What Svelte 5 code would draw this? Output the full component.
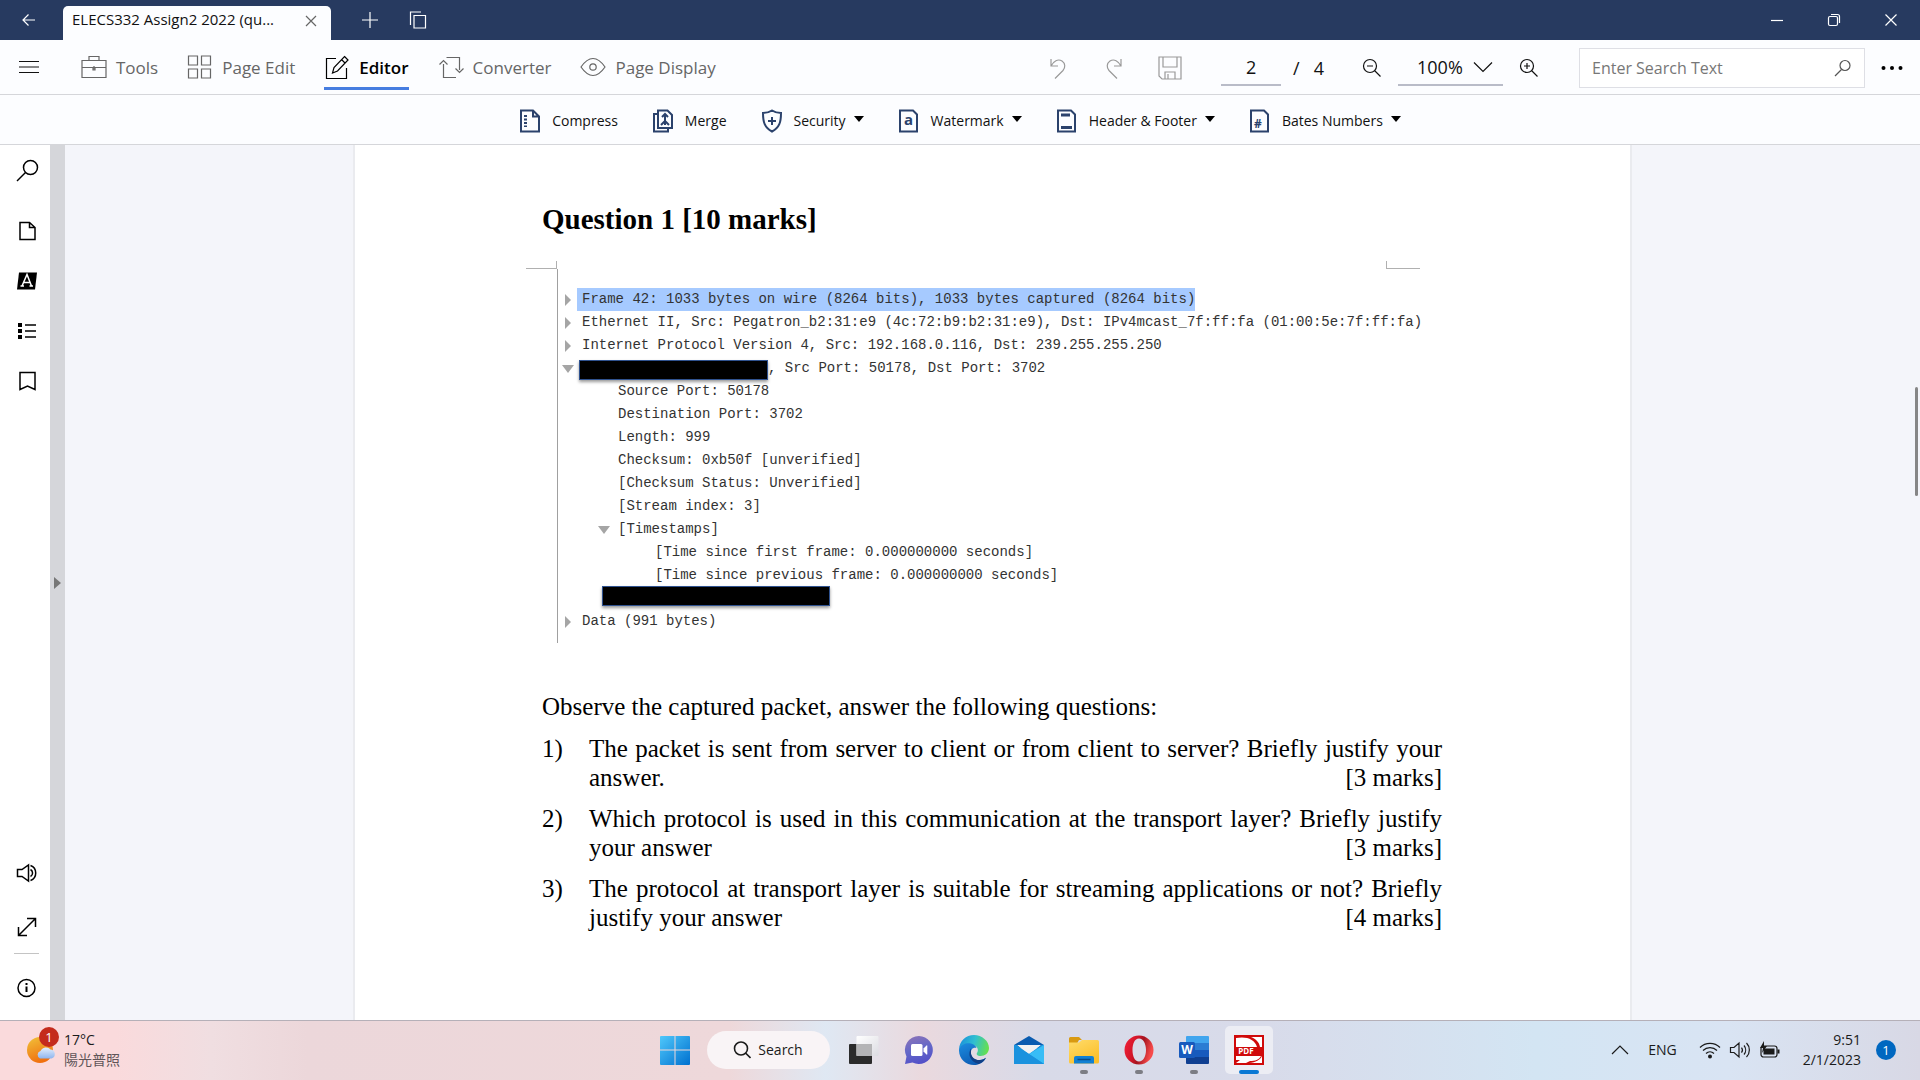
<script lang="ts">
  interface PacketRow {
    level: number;
    text: string;
    marker?: 'closed' | 'open';
    selected?: boolean;
    redacted?: 'head' | 'full';
  }

  const packetRows: PacketRow[] = [
    { level: 0, marker: 'closed', selected: true, text: 'Frame 42: 1033 bytes on wire (8264 bits), 1033 bytes captured (8264 bits)' },
    { level: 0, marker: 'closed', text: 'Ethernet II, Src: Pegatron_b2:31:e9 (4c:72:b9:b2:31:e9), Dst: IPv4mcast_7f:ff:fa (01:00:5e:7f:ff:fa)' },
    { level: 0, marker: 'closed', text: 'Internet Protocol Version 4, Src: 192.168.0.116, Dst: 239.255.255.250' },
    { level: 0, marker: 'open', redacted: 'head', text: ', Src Port: 50178, Dst Port: 3702' },
    { level: 1, text: 'Source Port: 50178' },
    { level: 1, text: 'Destination Port: 3702' },
    { level: 1, text: 'Length: 999' },
    { level: 1, text: 'Checksum: 0xb50f [unverified]' },
    { level: 1, text: '[Checksum Status: Unverified]' },
    { level: 1, text: '[Stream index: 3]' },
    { level: 1, marker: 'open', text: '[Timestamps]' },
    { level: 2, text: '[Time since first frame: 0.000000000 seconds]' },
    { level: 2, text: '[Time since previous frame: 0.000000000 seconds]' },
    { level: 0, redacted: 'full', text: '' },
    { level: 0, marker: 'closed', text: 'Data (991 bytes)' },
  ];

  // PDF text is set line by line, so each question keeps its own line break
  const questions = [
    { first: 'The packet is sent from server to client or from client to server? Briefly justify your', last: 'answer.', marks: 3 },
    { first: 'Which protocol is used in this communication at the transport layer? Briefly justify', last: 'your answer', marks: 3 },
    { first: 'The protocol at transport layer is suitable for streaming applications or not? Briefly', last: 'justify your answer', marks: 4 },
  ];

  const modes = ['Tools', 'Page Edit', 'Editor', 'Converter', 'Page Display'];
  const actions = [
    { name: 'Compress', menu: false },
    { name: 'Merge', menu: false },
    { name: 'Security', menu: true },
    { name: 'Watermark', menu: true },
    { name: 'Header & Footer', menu: true },
    { name: 'Bates Numbers', menu: true },
  ];

  let activeMode = $state('Editor');
  let pageNumber = $state('2');
  let zoomLevel = $state('100%');
  let searchText = $state('');
</script>

<div class="window">
  <header class="titlebar">
    <button class="title-btn back" aria-label="Back">
      <svg width="14" height="14" viewBox="0 0 14 14"><path d="M13 7H1.500M6.500 1.500L1 7l5.500 5.500" /></svg>
    </button>
    <div class="tab">
      <span class="tab-name">ELECS332 Assign2 2022 (qu...</span>
      <button class="tab-close" aria-label="Close tab">
        <svg width="12" height="12" viewBox="0 0 12 12"><path d="M1 1l10 10M11 1L1 11" /></svg>
      </button>
    </div>
    <button class="title-btn new-tab" aria-label="New tab">
      <svg width="18" height="18" viewBox="0 0 18 18"><path d="M9 1v16M1 9h16" /></svg>
    </button>
    <button class="title-btn copy-tab" aria-label="Duplicate tab">
      <svg width="18" height="18" viewBox="0 0 18 18"><path d="M1.500 14V1H12M5 4.500h11.500V17H5z" /></svg>
    </button>
    <div class="window-controls">
      <button class="title-btn" aria-label="Minimize">
        <svg width="14" height="14" viewBox="0 0 14 14"><path d="M1 7.500h12" /></svg>
      </button>
      <button class="title-btn" aria-label="Restore">
        <svg width="14" height="14" viewBox="0 0 14 14"><rect x="1.500" y="3.500" width="9" height="9" rx="1.500" /><path d="M4 1.500h6.500a2 2 0 0 1 2 2V10" /></svg>
      </button>
      <button class="title-btn" aria-label="Close">
        <svg width="14" height="14" viewBox="0 0 14 14"><path d="M1.500 1.500l11 11M12.500 1.500l-11 11" /></svg>
      </button>
    </div>
  </header>

  <div class="toolbar">
    <button class="icon-btn menu" aria-label="Menu">
      <svg width="22" height="14" viewBox="0 0 22 14"><path d="M1 1.500h20M1 7h20M1 12.500h20" /></svg>
    </button>
    <nav class="modes">
      {#each modes as mode}
        <button class="mode" class:active={mode === activeMode} onclick={() => (activeMode = mode)}>
          <svg width="26" height="26" viewBox="0 0 26 26">
            {#if mode === 'Tools'}
              <path d="M1 6.500h24v17H1zM8 6.500V2.500h10v4M1 13.500h24M13 12v4" /><path d="M12 14h2v2h-2z" />
            {:else if mode === 'Page Edit'}
              <path d="M1.500 2h9v9h-9zM14.500 2h9v9h-9zM1.500 15h9v9h-9zM14.500 15h9v9h-9z" />
            {:else if mode === 'Editor'}
              <path d="M12 4.500H2.500v20h20V14" /><path d="M20.500 2.500l3.500 3.500L13.500 17l-5 2 1.500-5.500zM17.500 5.500l3.500 3.500" />
            {:else if mode === 'Converter'}
              <path d="M5.500 10v13.500H18M1.500 10.500l4-4 4 4M8.500 3.500h13V16M17.500 14.500l4 4 4-4" />
            {:else}
              <path d="M1 13C5.500 6.500 9 4.500 13 4.500S20.500 6.500 25 13c-4.500 6.500-8 8.500-12 8.500S5.500 19.500 1 13z" /><circle cx="13" cy="13" r="3.200" />
            {/if}
          </svg>
          <span>{mode}</span>
        </button>
      {/each}
    </nav>

    <div class="view-tools">
      <button class="icon-btn faded" aria-label="Undo">
        <svg width="24" height="24" viewBox="0 0 24 24"><path d="M5 3v7h7M5 10c2.500-5 7-7.500 11-5 3.500 2.500 3.500 6.500 1 9.500l-8 8" /></svg>
      </button>
      <button class="icon-btn faded redo" aria-label="Redo">
        <svg width="24" height="24" viewBox="0 0 24 24"><path d="M19 3v7h-7M19 10C16.500 5 12 2.500 8 5c-3.500 2.500-3.500 6.500-1 9.500l8 8" /></svg>
      </button>
      <button class="icon-btn faded save" aria-label="Save">
        <svg width="24" height="24" viewBox="0 0 24 24"><path d="M1 1h22v22H4l-3-3zM5 1v10h14V1M7 23v-7h10v7M10 18v5" /></svg>
      </button>
      <input class="page-input" aria-label="Page number" bind:value={pageNumber} />
      <span class="page-total"><span>/</span><span>4</span></span>
      <button class="icon-btn" aria-label="Zoom out">
        <svg width="20" height="20" viewBox="0 0 20 20"><circle cx="8" cy="8" r="6.500" /><path d="M5 8h6M12.500 12.500l6 6" /></svg>
      </button>
      <label class="zoom">
        <select aria-label="Zoom level" bind:value={zoomLevel}>
          <option>100%</option>
          <option>125%</option>
          <option>150%</option>
        </select>
        <svg width="20" height="12" viewBox="0 0 20 12"><path d="M1 1.500l9 9 9-9" /></svg>
      </label>
      <button class="icon-btn" aria-label="Zoom in">
        <svg width="20" height="20" viewBox="0 0 20 20"><circle cx="8" cy="8" r="6.500" /><path d="M5 8h6M8 5v6M12.500 12.500l6 6" /></svg>
      </button>
      <div class="search-box">
        <input type="text" aria-label="Search" placeholder="Enter Search Text" bind:value={searchText} />
        <svg width="18" height="18" viewBox="0 0 18 18"><circle cx="11" cy="6.500" r="5" /><path d="M7.500 10.500L1 17" /></svg>
      </div>
      <button class="icon-btn more" aria-label="More">
        <svg width="22" height="6" viewBox="0 0 22 6"><circle cx="2.500" cy="3" r="2" /><circle cx="11" cy="3" r="2" /><circle cx="19.500" cy="3" r="2" /></svg>
      </button>
    </div>
  </div>

  <div class="actions">
    {#each actions as action}
      <button class="action">
        <svg width="22" height="24" viewBox="0 0 22 24">
          {#if action.name === 'Compress'}
            <path d="M2 1.500h12l6 6v15H2zM14 1.500v6h6" /><path d="M6.500 6v12" stroke-dasharray="2 1.500" stroke-width="3" />
          {:else if action.name === 'Merge'}
            <path d="M6 1.500h9.500l4.500 4.500v13H6z" /><path d="M6 5H2v17.500h14V19M13 16V5M10 8l3-3 3 3M9 16l4-4 4 4" />
          {:else if action.name === 'Security'}
            <path d="M11 1.500c3 2 6 2.500 9 2.500 0 9-1.500 14.500-9 18.500C3.500 18.500 2 13 2 4c3 0 6-.500 9-2.500zM11 8v8M7 12h8" />
          {:else if action.name === 'Watermark'}
            <path d="M2 1.500h13l4 4v17H2z" /><text x="6" y="16">a</text>
          {:else if action.name === 'Header & Footer'}
            <path d="M2 1.500h13l4 4v17H2z" /><path d="M5 6h9M5 18.500h11" stroke-width="3" />
          {:else}
            <path d="M2 1.500h13l4 4v17H2z" /><text class="hash" x="5" y="19">#</text>
          {/if}
        </svg>
        <span>{action.name}</span>
        {#if action.menu}
          <svg class="caret" width="10" height="6" viewBox="0 0 10 6"><path d="M0 0h10L5 6z" /></svg>
        {/if}
      </button>
    {/each}
  </div>

  <div class="workspace">
    <aside class="sidebar">
      <button class="find" aria-label="Find">
        <svg width="24" height="24" viewBox="0 0 24 24"><circle cx="15.500" cy="8.500" r="7" /><path d="M10.500 13.500L2 22" /></svg>
      </button>
      <button aria-label="Thumbnails">
        <svg width="20" height="20" viewBox="0 0 20 20"><path d="M3 1.500h9.500L18 6.500v12H3zM12.500 1.500v5H18" /></svg>
      </button>
      <button aria-label="Annotations">
        <svg width="20" height="20" viewBox="0 0 20 20"><path class="solid" d="M2 1.500h18L18 18.500H0z" /><path class="knockout" d="M5 15l5-11.500L14.500 15M6.500 11.500h6M3.500 15h3.500M12.500 15H16" /></svg>
      </button>
      <button aria-label="Outline">
        <svg width="20" height="20" viewBox="0 0 20 20"><path class="solid" d="M1 2h4v4H1zM1 8h4v4H1zM1 14h4v4H1z" /><path d="M8 4h11M8 10h11M8 16h11" /></svg>
      </button>
      <button aria-label="Bookmarks">
        <svg width="20" height="20" viewBox="0 0 20 20"><path d="M3 1.500h15v17L10.500 15 3 18.500z" /></svg>
      </button>
      <div class="spacer"></div>
      <button class="speak" aria-label="Read aloud">
        <svg width="22" height="20" viewBox="0 0 22 20"><path d="M1.500 6.500H6L12.500 2v16L6 13.500H1.500zM14.500 2.500a8 8 0 0 1 0 15M14.500 6.500a4 4 0 0 1 0 7" /></svg>
      </button>
      <button aria-label="Full screen">
        <svg width="20" height="20" viewBox="0 0 20 20"><path d="M1.500 18.500l17-17M10 1.500h8.500V10M1.500 10v8.500H10" /></svg>
      </button>
      <hr />
      <button aria-label="Info">
        <svg width="20" height="20" viewBox="0 0 20 20"><circle cx="9.500" cy="10" r="8.500" /><path d="M9.500 8.500V14M9.500 5v2" stroke-width="2" /></svg>
      </button>
    </aside>
    <button class="splitter" aria-label="Expand sidebar">
      <svg width="7" height="12" viewBox="0 0 7 12"><path d="M0 0l7 6-7 6z" /></svg>
    </button>

    <main class="canvas">
      <article class="page">
        <h1>Question 1 [10 marks]</h1>

        <figure class="capture">
          <div class="crop-marks">
            <span class="crop left"></span>
            <span class="crop right"></span>
          </div>
          <div class="packet">
            {#each packetRows as row}
              <div class="packet-row level-{row.level}">
                <span class="marker">
                  {#if row.marker === 'closed'}
                    <svg width="6" height="12" viewBox="0 0 6 12"><path d="M0 0l6 6-6 6z" /></svg>
                  {:else if row.marker === 'open'}
                    <svg width="12" height="8" viewBox="0 0 12 8"><path d="M0 0h12L6 8z" /></svg>
                  {/if}
                </span>
                {#if row.redacted}
                  <span class="redaction {row.redacted}"></span>
                {/if}
                <span class="packet-text" class:selected={row.selected} class:after-redaction={row.redacted}>{row.text}</span>
              </div>
            {/each}
          </div>
        </figure>

        <p class="intro">Observe the captured packet, answer the following questions:</p>
        <ol class="questions">
          {#each questions as question, i}
            <li>
              <span class="number">{i + 1})</span>
              <div class="question">
                <p class="first-line">{question.first}</p>
                <p class="last-line"><span>{question.last}</span><span>[{question.marks} marks]</span></p>
              </div>
            </li>
          {/each}
        </ol>
      </article>
      <div class="scroll-thumb"></div>
    </main>
  </div>

  <footer class="taskbar">
    <button class="weather">
      <span class="weather-icon">
        <svg width="30" height="30" viewBox="0 0 30 30">
          <defs>
            <linearGradient id="sun" x1="0" y1="0" x2="0.400" y2="1"><stop offset="0" stop-color="#f0c23a" /><stop offset="1" stop-color="#f0700f" /></linearGradient>
            <linearGradient id="cloud" x1="0" y1="0" x2="0" y2="1"><stop offset="0" stop-color="#e4effc" /><stop offset="1" stop-color="#8fb5ee" /></linearGradient>
          </defs>
          <circle cx="14" cy="15" r="13" fill="url(#sun)" />
          <path d="M14 23.500a4 4 0 0 1 .500-7.500 6 6 0 0 1 10-1.500 4.600 4.600 0 0 1 1 9z" fill="url(#cloud)" />
        </svg>
        <span class="weather-badge">1</span>
      </span>
      <span class="weather-text"><span>17°C</span><span class="condition">陽光普照</span></span>
    </button>

    <div class="apps">
      <button class="app" aria-label="Start">
        <svg width="30" height="30" viewBox="0 0 30 30">
          <defs><linearGradient id="win" x1="0" y1="0" x2="1" y2="1"><stop offset="0" stop-color="#4fc8fb" /><stop offset="1" stop-color="#0070cf" /></linearGradient></defs>
          <path d="M1 1h13.500v13.500H0V2a1 1 0 0 1 1-1zM15.500 1H29a1 1 0 0 1 1 1v12.500H15.500zM0 15.500h14.500V30H1a1 1 0 0 1-1-1zM15.500 15.500H30V29a1 1 0 0 1-1 1H15.500z" fill="url(#win)" />
        </svg>
      </button>
      <button class="search-pill">
        <svg width="18" height="18" viewBox="0 0 18 18"><circle cx="8" cy="7.500" r="6.500" /><path d="M12.500 12l5 5" /></svg>
        <span>Search</span>
      </button>
      <button class="app" aria-label="Task view">
        <svg width="30" height="30" viewBox="0 0 30 30">
          <defs><linearGradient id="pane" x1="0" y1="0" x2="1" y2="1"><stop offset="0" stop-color="#ffffff" /><stop offset="1" stop-color="#dcdce2" /></linearGradient></defs>
          <rect x="0" y="9" width="23" height="20" rx="1" fill="#2b2b2b" />
          <rect x="7.500" y="1" width="22" height="20" rx="1" fill="url(#pane)" />
          <rect x="7.500" y="9" width="15.500" height="12" fill="#b4b4b6" />
        </svg>
      </button>
      <button class="app" aria-label="Chat">
        <svg width="30" height="30" viewBox="0 0 30 30">
          <defs><linearGradient id="chat" x1="0.200" y1="0" x2="0.500" y2="1"><stop offset="0" stop-color="#8b73b8" /><stop offset="0.500" stop-color="#6468c8" /><stop offset="1" stop-color="#5350c8" /></linearGradient></defs>
          <path d="M15 1a14 14 0 1 1-6.500 26.500L1 29l1.500-7.500A14 14 0 0 1 15 1z" fill="url(#chat)" />
          <rect x="7" y="9" width="11.500" height="12" rx="1.500" fill="#fff" />
          <path d="M19.500 13.500L22.500 10.500q.800-.500.800.500v8q0 1-.800.500l-3-3z" fill="#fff" />
        </svg>
      </button>
      <button class="app" aria-label="Edge">
        <svg width="30" height="30" viewBox="0 0 30 30">
          <defs>
            <linearGradient id="edge-top" x1="0" y1="0.300" x2="1" y2="0.500"><stop offset="0" stop-color="#1a91dc" /><stop offset="0.500" stop-color="#30bfd0" /><stop offset="1" stop-color="#66e04e" /></linearGradient>
            <linearGradient id="edge-side" x1="0" y1="0" x2="0.500" y2="1"><stop offset="0" stop-color="#1c8de0" /><stop offset="1" stop-color="#0d5cb4" /></linearGradient>
          </defs>
          <path d="M0 14.500C.500 5.500 7 0 15 0s15 6 15 13c0 5-4 8-8.500 8-3 0-4.500-1.500-3.500-3 1.500-2 1.500-7-4-8C8.500 9 3 11 0 14.500z" fill="url(#edge-top)" />
          <path d="M0 14.500C2.500 8.500 8 7.500 12 8.500c3 .500 5 2.500 5.500 4.500-4.500-1-6 2.500-5.500 6 .600 4 5 6.500 9 6 2.500-.300 4.500-1.200 6-2.300C25 27 20.500 30 15 30 6.500 30-.300 23.500 0 14.500z" fill="url(#edge-side)" />
          <path d="M12 13.500c-3.500 5-1.500 13 7.500 15.500 3.500-1 6-3.500 7.500-6.300-1.500 1.100-3.500 2-6 2.300-4.500.500-8.500-2.500-9-6.500z" fill="#103f86" />
        </svg>
      </button>
      <button class="app" aria-label="Mail">
        <svg width="30" height="30" viewBox="0 0 30 30">
          <path d="M0 10L15 1l15 9v3H0z" fill="#0a5cb0" />
          <path d="M3 10h24l-12 10z" fill="#f2f2f2" />
          <path d="M0 10l2.500 0L15 19 27.500 10H30v19H0z" fill="#1c96e0" />
          <path d="M15 19l15-9v19z" fill="#38bdf6" />
          <path d="M15 19l15 10H0V10z" fill="#1a92de" />
        </svg>
      </button>
      <button class="app running" aria-label="File Explorer">
        <svg width="30" height="30" viewBox="0 0 30 30">
          <defs><linearGradient id="folder" x1="0" y1="0" x2="0.600" y2="1"><stop offset="0" stop-color="#ffdc6b" /><stop offset="1" stop-color="#fbbf2a" /></linearGradient></defs>
          <path d="M0 3.500A1.500 1.500 0 0 1 1.500 2H10l3 3h-3L8 8.500H0z" fill="#d99a12" />
          <path d="M0 7.500h10l3-2.500h15.500A1.500 1.500 0 0 1 30 6.500V27a1.500 1.500 0 0 1-1.500 1.500h-27A1.500 1.500 0 0 1 0 27z" fill="url(#folder)" />
          <path d="M5 28.500V23a2 2 0 0 1 2-2h16a2 2 0 0 1 2 2v5.500z" fill="#1180d3" />
          <path d="M8.500 24.500h13" stroke="#0a4b86" stroke-width="1.500" />
        </svg>
      </button>
      <button class="app running" aria-label="Opera">
        <svg width="30" height="30" viewBox="0 0 30 30">
          <defs><linearGradient id="opera" x1="0" y1="0" x2="1" y2="0.300"><stop offset="0" stop-color="#f42038" /><stop offset="0.450" stop-color="#d01528" /><stop offset="0.650" stop-color="#a31420" /><stop offset="1" stop-color="#f64a4a" /></linearGradient></defs>
          <path fill-rule="evenodd" d="M15 .500a14.500 14.500 0 1 1 0 29 14.500 14.500 0 1 1 0-29zM15 3.500c-4.500 0-6.500 5.500-6.500 11.500S10.500 26.500 15 26.500s7-5.500 7-11.500S19.500 3.500 15 3.500z" fill="url(#opera)" />
        </svg>
      </button>
      <button class="app running" aria-label="Word">
        <svg width="30" height="30" viewBox="0 0 30 30">
          <path d="M7 2a1 1 0 0 1 1-1h21a1 1 0 0 1 1 1v6H7z" fill="#41a5ee" />
          <path d="M7 8h23v7H7z" fill="#2b7cd3" />
          <path d="M7 15h23v7H7z" fill="#185abd" />
          <path d="M7 22h23v6a1 1 0 0 1-1 1H8a1 1 0 0 1-1-1z" fill="#103f91" />
          <rect x="0" y="7" width="16" height="16" rx="1.500" fill="#185abd" />
          <text class="word-letter" x="8" y="19">W</text>
        </svg>
      </button>
      <button class="app running current" aria-label="PDF Reader">
        <svg width="30" height="30" viewBox="0 0 30 30">
          <rect width="30" height="30" fill="#d00a0a" />
          <path d="M2 12V3c10-2 19 1 21 9zM17 2h11v10h-2c-1-5-4-8-9-10z" fill="#fff" />
          <path d="M2 21h25c-2 4-6 5-11 5l-4 2H2l4-3H2zM28 21v7H15c7-.500 11-3 13-7z" fill="#fff" />
          <text class="pdf-letters" x="12" y="19">PDF</text>
        </svg>
      </button>
    </div>

    <div class="tray">
      <button aria-label="Show hidden icons">
        <svg width="18" height="10" viewBox="0 0 18 10"><path d="M1 9l8-8 8 8" /></svg>
      </button>
      <button class="language">ENG</button>
      <button class="status" aria-label="Network, volume and battery">
        <svg width="22" height="18" viewBox="0 0 22 18"><path d="M1 6.500a14 14 0 0 1 20 0M4 9.500a10 10 0 0 1 14 0M7 12.500a6 6 0 0 1 8 0" /><circle class="solid" cx="11" cy="15.500" r="2" /></svg>
        <svg width="22" height="18" viewBox="0 0 22 18"><path d="M1.500 6.500H5L10 2v14l-5-4.500H1.500zM12.500 6.500a4 4 0 0 1 0 5M15 4.500a7 7 0 0 1 0 9M17.500 2a10 10 0 0 1 0 14" /></svg>
        <svg width="22" height="18" viewBox="0 0 22 18"><rect x="2" y="5" width="16" height="11" rx="2.500" /><path class="solid" d="M4.500 7.500h11v6h-11zM18.500 8.500h2v4h-2z" /><path class="bolt" d="M5 0L1 7h3l-1 5 5-7H5z" /></svg>
      </button>
      <button class="clock"><span>9:51</span><span>2/1/2023</span></button>
      <span class="notifications">1</span>
    </div>
  </footer>
</div>

<style>
  :global(body) {
    margin: 0;
  }

  .window {
    display: flex;
    flex-direction: column;
    height: 100vh;
    overflow: hidden;
    background: #fcfdff;
    color: #111;
    font-family: 'Open Sans', 'Noto Sans', sans-serif;
    font-size: 14px;
  }

  button,
  input,
  select {
    font: inherit;
    color: inherit;
    background: none;
    border: none;
    padding: 0;
    margin: 0;
  }

  button {
    display: flex;
    align-items: center;
    cursor: pointer;
  }

  svg {
    display: block;
    flex-shrink: 0;
    fill: none;
    stroke: currentColor;
    stroke-width: 1.2;
  }

  /* title bar */
  .titlebar {
    display: flex;
    align-items: center;
    height: 40px;
    flex-shrink: 0;
    background: #273a60;
    color: #fff;
  }

  .title-btn {
    justify-content: center;
  }

  .back {
    width: 63px;
    padding-right: 6px;
    box-sizing: border-box;
  }

  .tab {
    display: flex;
    align-items: center;
    justify-content: space-between;
    align-self: flex-end;
    box-sizing: border-box;
    width: 268px;
    height: 34px;
    padding: 0 14px 8px 9px;
    border-radius: 5px 5px 0 0;
    background: #fcfdff;
    color: #111;
    font-size: 15px;
  }

  .tab-close {
    color: #666;
    padding-top: 4px;
  }

  .new-tab {
    margin-left: 30px;
  }

  .copy-tab {
    margin-left: 30px;
  }

  .window-controls {
    display: flex;
    gap: 43px;
    margin-left: auto;
    padding-right: 22px;
  }

  /* main toolbar */
  .toolbar {
    display: flex;
    align-items: center;
    height: 54px;
    flex-shrink: 0;
    border-bottom: 1px solid #d5d6da;
  }

  .menu {
    margin: 0 41px 0 18px;
  }

  .modes {
    display: flex;
    gap: 29px;
  }

  .mode {
    gap: 9px;
    box-sizing: border-box;
    height: 42px;
    margin-top: 3px;
    border-bottom: 3px solid transparent;
    color: #666;
    font-size: 17px;
    font-weight: 500;
  }

  .mode.active {
    color: #000;
    border-bottom-color: #467de0;
    font-weight: 600;
  }

  .view-tools {
    display: flex;
    align-items: center;
    margin-left: auto;
    padding-top: 2px;
    font-size: 18px;
  }

  .faded {
    color: #999;
  }

  .redo {
    margin: 0 32px;
  }

  .page-input {
    width: 60px;
    height: 36px;
    box-sizing: border-box;
    margin: 0 12px 0 39px;
    border-bottom: 2px solid #b9bcc8;
    text-align: center;
  }

  .page-total {
    display: flex;
    gap: 14px;
    margin-right: 38px;
  }

  .zoom {
    display: flex;
    align-items: center;
    gap: 6px;
    box-sizing: border-box;
    height: 36px;
    margin: 0 16px;
    padding: 0 10px 0 19px;
    border-bottom: 2px solid #b9bcc8;
  }

  .zoom select {
    appearance: none;
    width: 50px;
  }

  .search-box {
    display: flex;
    align-items: center;
    box-sizing: border-box;
    width: 286px;
    height: 40px;
    margin: 0 16px 0 40px;
    padding: 0 12px;
    border: 1px solid #dedfe5;
    background: #fff;
    font-size: 16px;
    color: #555;
  }

  .search-box input {
    flex: 1;
    min-width: 0;
  }

  .search-box input::placeholder {
    color: #777;
  }

  .more {
    padding-right: 17px;
  }

  .more svg {
    fill: #000;
    stroke: none;
  }

  /* editor actions */
  .actions {
    display: flex;
    align-items: center;
    justify-content: center;
    gap: 34px;
    box-sizing: border-box;
    height: 50px;
    flex-shrink: 0;
    padding-top: 2px;
    border-bottom: 1px solid #d5d6da;
  }

  .action {
    gap: 11px;
  }

  .action svg {
    stroke: #2b426c;
    stroke-width: 2;
  }

  .action text {
    fill: #2b426c;
    stroke: none;
    font-size: 15px;
    font-weight: 700;
  }

  .action .hash {
    font-size: 12px;
  }

  .action .caret {
    margin: 0 0 4px -3px;
    fill: #000;
    stroke: none;
  }

  /* workspace */
  .workspace {
    display: flex;
    flex: 1;
    min-height: 0;
  }

  .sidebar {
    display: flex;
    flex-direction: column;
    align-items: center;
    gap: 30px;
    width: 50px;
    box-sizing: border-box;
    padding: 14px 0 22px 3px;
    background: #fff;
    color: #000;
  }

  .sidebar svg {
    stroke-width: 1.5;
  }

  .sidebar .solid {
    fill: #000;
    stroke: none;
  }

  .sidebar .knockout {
    stroke: #fff;
  }

  .sidebar hr {
    width: 25px;
    margin: -14px 0 -6px;
    border: none;
    border-top: 1px solid #c4c4c4;
  }

  .find {
    margin-bottom: 8px;
  }

  .speak {
    margin-bottom: 4px;
  }

  .spacer {
    flex: 1;
  }

  .splitter {
    justify-content: center;
    width: 15px;
    flex-shrink: 0;
    background: #d5d6da;
  }

  .splitter svg {
    fill: #777;
    stroke: none;
  }

  .canvas {
    position: relative;
    flex: 1;
    min-width: 0;
    overflow: hidden;
    background: #f4f5fa;
  }

  .scroll-thumb {
    position: absolute;
    top: 242px;
    right: 2px;
    width: 3px;
    height: 109px;
    border-radius: 2px;
    background: #868686;
  }

  .page {
    box-sizing: border-box;
    max-width: 1279px;
    min-height: 100%;
    margin: 0 auto;
    padding: 57px 188px 0 187px;
    border: solid #eaebef;
    border-width: 0 2px;
    background: #fff;
    color: #000;
    font-family: 'Liberation Serif', serif;
    font-size: 25px;
    line-height: 29px;
  }

  h1 {
    margin: 0;
    font-size: 29px;
    line-height: 34px;
  }

  .capture {
    margin: 25px 22px 0 -16px;
  }

  .crop-marks {
    display: flex;
    justify-content: space-between;
  }

  .crop {
    box-sizing: border-box;
    width: 31px;
    height: 8px;
    border: 0 solid #b0b0b0;
    border-bottom-width: 1px;
  }

  .crop.left {
    border-right-width: 1px;
  }

  .crop.right {
    width: 34px;
    border-left-width: 1px;
  }

  .packet {
    margin-left: 31px;
    padding: 19px 0 10px;
    border-left: 1px solid #a0a0a0;
    color: #333;
    font-family: 'Liberation Mono', monospace;
    font-size: 14px;
    line-height: 23px;
    white-space: pre;
  }

  .packet-row {
    display: flex;
    align-items: center;
    height: 23px;
  }

  .level-1 {
    padding-left: 36px;
  }

  .level-2 {
    padding-left: 73px;
  }

  .marker {
    display: flex;
    justify-content: center;
    width: 19px;
    flex-shrink: 0;
  }

  .marker svg {
    fill: #a5a5a5;
    stroke: none;
  }

  .packet-text {
    padding: 0 0 0 5px;
  }

  .packet-text.selected {
    background: #a6caff;
  }

  .redaction {
    box-sizing: border-box;
    height: 20px;
    border: 1px solid #2f528f;
    background: #000;
    box-shadow: 0 2px 3px rgb(0 0 0 / 40%);
  }

  .redaction.head {
    width: 189px;
    margin: 2px 0 0 2px;
  }

  .redaction.full {
    width: 228px;
    margin: 0 0 6px 25px;
  }

  .packet-text.after-redaction {
    padding: 0;
  }

  .intro {
    margin: 49px 0 13px;
  }

  .questions {
    display: flex;
    flex-direction: column;
    gap: 12px;
    margin: 0;
    padding: 0;
    list-style: none;
  }

  .questions li {
    display: flex;
  }

  .number {
    width: 47px;
    flex-shrink: 0;
  }

  .question {
    flex: 1;
  }

  .question p {
    margin: 0;
  }

  .first-line {
    text-align: justify;
    text-align-last: justify;
  }

  .last-line {
    display: flex;
    justify-content: space-between;
  }

  /* taskbar */
  .taskbar {
    display: grid;
    grid-template-columns: 1fr auto 1fr;
    align-items: center;
    box-sizing: border-box;
    height: 60px;
    flex-shrink: 0;
    padding-bottom: 2px;
    border-top: 1px solid #b5b0b8;
    background: linear-gradient(90deg, #fadadc 0%, #fadadc 6%, #f0dee1 11%, #ecd7da 16%, #eed8da 38%, #dfe8f3 43%, #ead9de 48%, #d8dae8 54%, #d8dbea 66%, #d3e5f3 80%, #d9e4f3 90%, #d8d8e5 100%);
    color: #1b1b1b;
  }

  .weather {
    gap: 8px;
    margin-left: 26px;
    justify-self: start;
  }

  .weather-icon {
    position: relative;
  }

  .weather svg,
  .app svg {
    stroke: none;
  }

  .weather-badge {
    position: absolute;
    top: -8px;
    right: -3px;
    width: 20px;
    border-radius: 50%;
    background: #c42b1c;
    color: #fff;
    font-size: 13px;
    line-height: 20px;
    text-align: center;
  }

  .weather-text {
    display: flex;
    flex-direction: column;
    line-height: 20px;
    text-align: left;
  }

  .condition {
    color: #605558;
    font-family: 'Open Sans', 'Noto Sans CJK TC', sans-serif;
  }

  .apps {
    display: flex;
    align-items: center;
    gap: 7px;
    padding-left: 3px;
  }

  .app {
    position: relative;
    justify-content: center;
    width: 48px;
    height: 48px;
    border-radius: 5px;
  }

  .app.running::after {
    content: '';
    position: absolute;
    bottom: 0;
    width: 8px;
    height: 4px;
    border-radius: 2px;
    background: #7c7d84;
  }

  .app.current {
    background: #ecedf4;
  }

  .app.current::after {
    width: 20px;
    background: #0a78d4;
  }

  .word-letter,
  .pdf-letters {
    fill: #fff;
    font-weight: 700;
    text-anchor: middle;
  }

  .word-letter {
    font-size: 12px;
  }

  .pdf-letters {
    font-size: 8px;
  }

  .search-pill {
    justify-content: center;
    gap: 7px;
    width: 123px;
    height: 38px;
    margin: 0 3px 0 1px;
    border-radius: 19px;
    background: #f9f4f6;
  }

  .search-pill svg {
    stroke-width: 1.6;
  }

  .tray {
    display: flex;
    align-items: center;
    justify-self: end;
    padding-right: 24px;
  }

  .language {
    margin: 0 22px 0 19px;
  }

  .status {
    gap: 8px;
  }

  .status .solid,
  .status .bolt {
    fill: #1b1b1b;
    stroke: none;
  }

  .clock {
    flex-direction: column;
    align-items: flex-end;
    margin: 0 15px 0 22px;
    line-height: 20px;
  }

  .notifications {
    width: 20px;
    border-radius: 50%;
    background: #0067c0;
    color: #fff;
    font-size: 13px;
    line-height: 20px;
    text-align: center;
  }
</style>
